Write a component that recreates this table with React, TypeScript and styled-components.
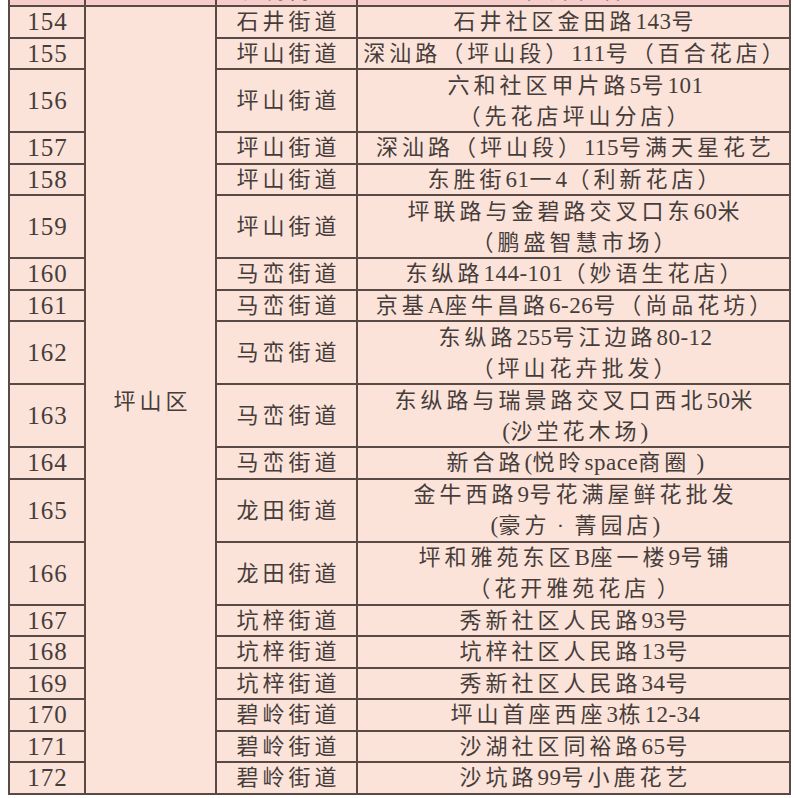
import React from "react";
import styled, { createGlobalStyle } from "styled-components";

const GlobalStyle = createGlobalStyle`
	html, body {
		margin: 0;
		padding: 0;
		background: #ffffff;
		overflow: hidden;
	}
	body {
		font-family: "Liberation Serif", "Noto Sans CJK SC", serif;
		color: #463d3b;
	}
`;

interface RowItem {
	no: string;
	street: string;
	lines: string[];
}

const rows: RowItem[] = [
	{ no: "153", street: "观澜街道", lines: ["花卉花谷"] },
	{ no: "154", street: "石井街道", lines: ["石井社区金田路143号"] },
	{ no: "155", street: "坪山街道", lines: ["深汕路（坪山段）111号（百合花店）"] },
	{ no: "156", street: "坪山街道", lines: ["六和社区甲片路5号101", "（先花店坪山分店）"] },
	{ no: "157", street: "坪山街道", lines: ["深汕路（坪山段）115号满天星花艺"] },
	{ no: "158", street: "坪山街道", lines: ["东胜街61一4（利新花店）"] },
	{ no: "159", street: "坪山街道", lines: ["坪联路与金碧路交叉口东60米", "（鹏盛智慧市场）"] },
	{ no: "160", street: "马峦街道", lines: ["东纵路144-101（妙语生花店）"] },
	{ no: "161", street: "马峦街道", lines: ["京基A座牛昌路6-26号（尚品花坊）"] },
	{ no: "162", street: "马峦街道", lines: ["东纵路255号江边路80-12", "（坪山花卉批发）"] },
	{ no: "163", street: "马峦街道", lines: ["东纵路与瑞景路交叉口西北50米", "(沙坣花木场)"] },
	{ no: "164", street: "马峦街道", lines: ["新合路(悦昤space商圈 )"] },
	{ no: "165", street: "龙田街道", lines: ["金牛西路9号花满屋鲜花批发", "(豪方 · 菁园店)"] },
	{ no: "166", street: "龙田街道", lines: ["坪和雅苑东区B座一楼9号铺", "（花开雅苑花店 ）"] },
	{ no: "167", street: "坑梓街道", lines: ["秀新社区人民路93号"] },
	{ no: "168", street: "坑梓街道", lines: ["坑梓社区人民路13号"] },
	{ no: "169", street: "坑梓街道", lines: ["秀新社区人民路34号"] },
	{ no: "170", street: "碧岭街道", lines: ["坪山首座西座3栋12-34"] },
	{ no: "171", street: "碧岭街道", lines: ["沙湖社区同裕路65号"] },
	{ no: "172", street: "碧岭街道", lines: ["沙坑路99号小鹿花艺"] },
];

const Sheet = styled.div<{ $rows: string }>`
	display: grid;
	grid-template-columns: 74px 129px 139px 431px;
	grid-template-rows: ${(p) => p.$rows};
	gap: 2px;
	padding: 2px;
	width: max-content;
	margin: -26.5px 0 0 8px;
	background: #5a4a45;
`;

const Cell = styled.div<{ $top?: boolean }>`
	display: flex;
	flex-direction: column;
	align-items: center;
	justify-content: center;
	background: ${(p) => (p.$top ? "#f6cdcb" : "#fbe3da")};
	font-size: 22px;
	letter-spacing: 4px;
	padding-left: 4px;
	line-height: 31px;
	white-space: nowrap;
	overflow: hidden;
`;

const NumCell = styled(Cell)`
	font-size: 25px;
	letter-spacing: 1px;
	padding-left: 1px;
`;

const DistrictCell = styled(Cell)<{ $span: number }>`
	grid-row: span ${(p) => p.$span};
	padding-top: 4px;
`;

const Latin = styled.span`
	font-size: 23px;
	letter-spacing: 0.5px;
`;

// ascii runs get tighter spacing than the han characters
const Mixed: React.FC<{ text: string }> = ({ text }) => {
	const parts = text.split(/([\x00-\x7F]+)/).filter((s) => s.length > 0);
	return (
		<div>
			{parts.map((p, i) =>
				/^[\x00-\x7F]+$/.test(p) ? <Latin key={i}>{p}</Latin> : <span key={i}>{p}</span>
			)}
		</div>
	);
};

export default function App() {
	const template = rows.map((r) => (r.lines.length > 1 ? "61px" : "29.5px")).join(" ");
	const [head, ...body] = rows;

	return (
		<>
			<GlobalStyle />
			<Sheet $rows={template}>
				<NumCell $top>{head.no}</NumCell>
				<Cell $top />
				<Cell $top>{head.street}</Cell>
				<Cell $top>
					{head.lines.map((l, i) => <Mixed key={i} text={l} />)}
				</Cell>
				{body.map((r, idx) => (
					<React.Fragment key={r.no}>
						<NumCell>{r.no}</NumCell>
						{idx === 0 && <DistrictCell $span={body.length}>坪山区</DistrictCell>}
						<Cell>{r.street}</Cell>
						<Cell>
							{r.lines.map((l, i) => <Mixed key={i} text={l} />)}
						</Cell>
					</React.Fragment>
				))}
			</Sheet>
		</>
	);
}
